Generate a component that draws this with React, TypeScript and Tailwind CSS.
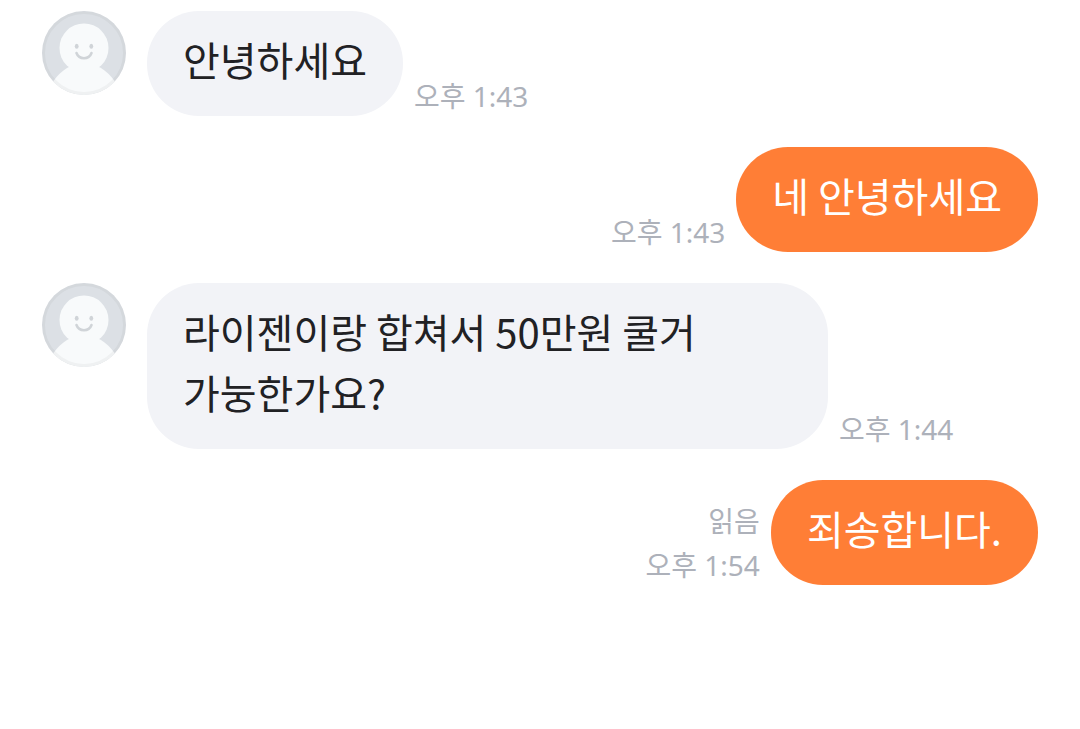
type Message = {
  id: number;
  mine: boolean;
  text: string;
  time: string;
  read?: boolean;
};

const messages: Message[] = [
  { id: 1, mine: false, text: '안녕하세요', time: '오후 1:43' },
  { id: 2, mine: true, text: '네 안녕하세요', time: '오후 1:43' },
  { id: 3, mine: false, text: '라이젠이랑 합쳐서 50만원 쿨거 가눙한가요?', time: '오후 1:44' },
  { id: 4, mine: true, text: '죄송합니다.', time: '오후 1:54', read: true },
];

function Avatar() {
  return (
    <svg viewBox="0 0 84 84" className="mr-[21px] size-[84px] shrink-0 self-start" aria-hidden="true">
      <defs>
        <clipPath id="avatar-clip">
          <circle cx="42" cy="42" r="42" />
        </clipPath>
      </defs>
      <g clipPath="url(#avatar-clip)">
        <rect width="84" height="84" fill="#dce0e5" />
        <path d="M5 84C9 70 18 60 29 55H55C66 60 75 70 79 84Z" fill="#f8fafb" />
        <circle cx="42" cy="37" r="24.5" fill="#f8fafb" />
      </g>
      <circle cx="42" cy="42" r="40.5" fill="none" stroke="#000000" strokeOpacity="0.035" strokeWidth="3" />
      <ellipse cx="34.7" cy="35.2" rx="1.9" ry="2.5" fill="#d0d4d8" />
      <ellipse cx="49.3" cy="35.2" rx="1.9" ry="2.5" fill="#d0d4d8" />
      <path d="M34.5 42C37 49 47 49 49.5 42" fill="none" stroke="#d0d4d8" strokeWidth="2.6" strokeLinecap="round" />
    </svg>
  );
}

function Bubble({ message }: { message: Message }) {
  return (
    <p
      className={`max-w-[681px] rounded-[52px] px-9 pt-[18px] pb-[26px] font-['Noto_Sans_CJK_KR',sans-serif] text-[40px] leading-[61px] break-keep ${
        message.mine ? 'bg-[#ff7e36] text-white' : 'bg-[#f2f3f7] text-[#212124]'
      }`}
    >
      {message.text}
    </p>
  );
}

function Meta({ message }: { message: Message }) {
  return (
    <div className="flex shrink-0 flex-col items-end gap-1 text-[28px] leading-[40px] text-[#adb1ba]">
      {message.read && <p>읽음</p>}
      <time>{message.time}</time>
    </div>
  );
}

function MessageRow({ message }: { message: Message }) {
  if (message.mine) {
    return (
      <li className="flex items-end justify-end gap-[11px]">
        <Meta message={message} />
        <Bubble message={message} />
      </li>
    );
  }

  return (
    <li className="flex items-end">
      <Avatar />
      <div className="flex items-end gap-[11px]">
        <Bubble message={message} />
        <Meta message={message} />
      </div>
    </li>
  );
}

export default function App() {
  return (
    <main className="min-h-screen bg-white px-[42px] pt-[11px] font-['Noto_Sans','Noto_Sans_CJK_KR',sans-serif]">
      <ul className="flex flex-col gap-[31px]">
        {messages.map((message) => (
          <MessageRow key={message.id} message={message} />
        ))}
      </ul>
    </main>
  );
}
